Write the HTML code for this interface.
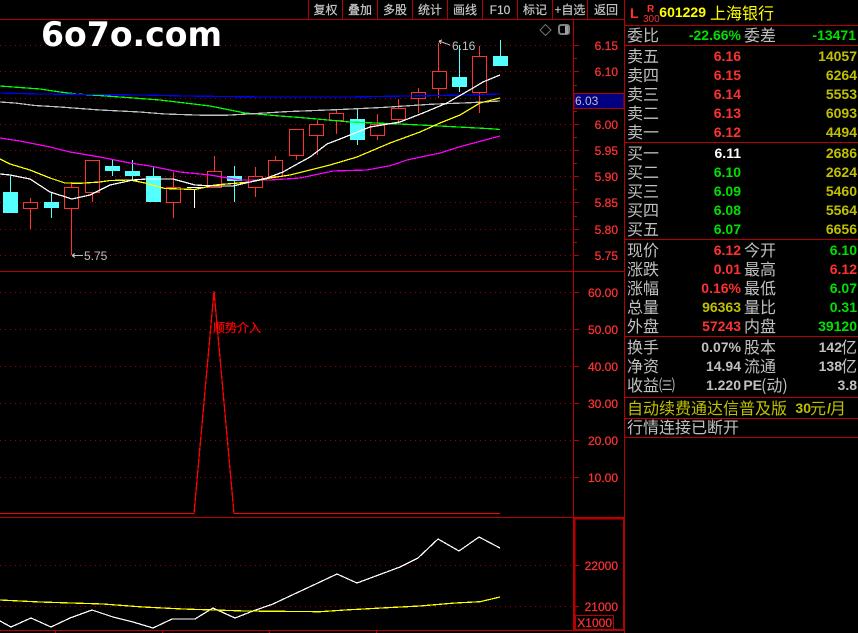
<!DOCTYPE html>
<html><head><meta charset="utf-8"><style>
html,body{margin:0;padding:0;background:#000;width:858px;height:633px;overflow:hidden}
svg{display:block}
.l{font:16px "WenQuanYi Zen Hei","Noto Sans CJK SC",sans-serif;fill:#c0c0c0}
.n{font:bold 14px "Liberation Sans",sans-serif;text-anchor:end}
.a{font:12px "Liberation Sans",sans-serif;fill:#ff3232;stroke:#ff3232;stroke-width:.25;text-anchor:end}
.t{font:12px "WenQuanYi Zen Hei","Noto Sans CJK SC",sans-serif;fill:#c8c8c8;stroke:#c8c8c8;stroke-width:.2;text-anchor:middle}
.r{fill:#ff3232}.g{fill:#00e000}.y{fill:#c0c000}.w{fill:#fff}.s{fill:#c0c0c0}
</style></head><body>
<svg width="858" height="633" viewBox="0 0 858 633" xmlns="http://www.w3.org/2000/svg">
<rect width="858" height="633" fill="#000"/>
<g shape-rendering="crispEdges">
<!-- dotted grid -->
<path d="M0 45.5H573M0 71.5H573M0 98.5H573M0 124.5H573M0 150.5H573M0 176.5H573M0 202.5H573M0 229.5H573M0 255.5H573M0 292.5H573M0 329.5H573M0 366.5H573M0 403.5H573M0 440.5H573M0 477.5H573M0 565.5H573M0 606.5H573" stroke="#a00000" stroke-dasharray="1 4" fill="none"/>
<!-- frame lines -->
<path d="M0 19.5H624M0 271.5H624M0 517.5H624M0 630.5H624M573.5 19V630M624.5 0V633M308.5 0V19M342.5 0V19M377.5 0V19M412.5 0V19M447.5 0V19M482.5 0V19M517.5 0V19M552.5 0V19M587.5 0V19M55.5 630V633M162.5 630V633M269.5 630V633M376.5 630V633" stroke="#b80000" fill="none"/>
<path d="M624 25.5H858M624 45.5H858M624 142.5H858M624 239.5H858M624 336.5H858M624 397.5H858M624 418.5H858M624 437.5H858" stroke="#b80000" fill="none"/>
<!-- axis ticks -->
<path d="M574 45.5h5M574 58.5h3M574 71.5h5M574 85.5h3M574 98.5h5M574 111.5h3M574 124.5h5M574 137.5h3M574 150.5h5M574 163.5h3M574 176.5h5M574 189.5h3M574 202.5h5M574 216.5h3M574 229.5h5M574 242.5h3M574 255.5h5M574 292.5h5M574 329.5h5M574 366.5h5M574 403.5h5M574 440.5h5M574 477.5h5M574 565.5h5M574 606.5h5" stroke="#b80000" fill="none"/>
<!-- 6.03 box -->
<rect x="574" y="93.5" width="50" height="15" fill="#000080" stroke="#b80000"/>
<!-- volume axis box -->
<rect x="574.5" y="518.5" width="49.5" height="111.5" fill="none" stroke="#b80000" stroke-width="2"/>
<rect x="575.5" y="615.5" width="38" height="14" fill="none" stroke="#b80000"/>
<!-- icons -->
<path d="M545.5 24.5L551 30L545.5 35.5L540 30Z" fill="none" stroke="#707070" shape-rendering="auto"/>
<rect x="559" y="25" width="10" height="9" rx="2" fill="none" stroke="#808080" stroke-width="2" shape-rendering="auto"/>
<rect x="565" y="26" width="3" height="8" fill="#a0a0a0"/>
<!-- wicks -->
<path stroke="#ff3232" fill="none" d="M30.5 198V229M71.5 182V255M92.5 192V202M173.5 172V218M214.5 156V171M255.5 167V197M275.5 156V176M296.5 155V160M317.5 120V155M336.5 110V134M377.5 114V140M398.5 99V124M418.5 88V113M438.5 43V98M479.5 46V113"/>
<path stroke="#54ffff" fill="none" d="M10.5 176V192M51.5 192V218M112.5 160V176M132.5 160V181M153.5 166V176M234.5 166V202M357.5 109V145M459.5 45V92M500.5 40V56"/>
<path stroke="#fff" fill="none" d="M194.5 190V208M187 187.5H202"/>
<!-- bodies red -->
<g fill="#000" stroke="#ff3232">
<rect x="23.5" y="202.5" width="14" height="6"/>
<rect x="64.5" y="187.5" width="14" height="21"/>
<rect x="85.5" y="160.5" width="14" height="32"/>
<rect x="166.5" y="187.5" width="14" height="15"/>
<rect x="207.5" y="171.5" width="14" height="16"/>
<rect x="248.5" y="176.5" width="14" height="11"/>
<rect x="268.5" y="160.5" width="14" height="16"/>
<rect x="289.5" y="129.5" width="14" height="26"/>
<rect x="309.5" y="124.5" width="14" height="11"/>
<rect x="329.5" y="113.5" width="14" height="7"/>
<rect x="370.5" y="124.5" width="14" height="11"/>
<rect x="391.5" y="108.5" width="14" height="11"/>
<rect x="411.5" y="92.5" width="14" height="6"/>
<rect x="432.5" y="71.5" width="14" height="17"/>
<rect x="472.5" y="56.5" width="14" height="36"/>
</g>
<!-- bodies cyan -->
<g fill="#54ffff">
<rect x="3" y="192" width="15" height="21"/>
<rect x="44" y="202" width="15" height="6"/>
<rect x="105" y="166" width="15" height="5"/>
<rect x="125" y="171" width="15" height="5"/>
<rect x="146" y="176" width="15" height="26"/>
<rect x="227" y="176" width="15" height="5"/>
<rect x="350" y="119" width="15" height="21"/>
<rect x="452" y="77" width="15" height="10"/>
<rect x="493" y="56" width="15" height="10"/>
</g>
<!-- MA lines -->
<g fill="none" stroke-width="1.25">
<polyline stroke="#00ff00" points="0,86 20,87.5 40,89 60,92 77,94 120,97 160,100 210,106 245,113 280,116 300,117.5 317,119 350,122 400,124 440,126 490,128.7 500,129.5"/>
<polyline stroke="#0000ff" points="0,93 40,94 143,95 184,96 265,97 348,97 407,96 470,95 500,94"/>
<polyline stroke="#c0c0c0" points="0,102 15,103 35,105.5 60,107 100,110 140,112 165,114 205,115.3 225,115.3 265,113 285,111.7 345,109.3 385,107.3 430,104.3 470,102.7 500,101"/>
<polyline stroke="#ff00ff" points="0,138 20,141 50,147 70,152 100,157 130,163 150,166 180,172 210,175 240,180 270,180 300,178 333,171 367,170 390,165.7 407,160 440,153 460,146.7 500,136"/>
<polyline stroke="#ffff00" points="0,159 10,164 30,170 50,178 65,183 80,183.3 100,182 110,180.5 130,180 145,183 165,188.5 195,189.5 215,185 250,182 270,178 290,175 330,165 357,157 390,143 420,132 440,123 460,115 480,103 500,98"/>
<polyline stroke="#ffffff" points="0,174 10,175 30,179 50,192 72,199 90,195 110,185 133,180 147,179 173,179 195,185 213,186 233,186 250,182 267,178 283,172 290,168 310,157 327,144 340,139 370,127 400,122 423,113 447,103 473,88 483,82 500,75"/>
<!-- spike -->
<polyline stroke="#ff0000" points="0,513.5 194,513.5 214,291 234,513.5 500,513.5"/>
<!-- bottom -->
<polyline stroke="#ffffff" points="0,621 11,627 31,618 51,627 70,618 92,610 113,617 133,622 153,628 172,619 195,619 213,608 235,618 253,611 273,604 290,596 320,582 337,574 357,583 400,567 418,558 438,539 459,551 479,537 500,548"/>
<polyline stroke="#ffff00" points="0,600 20,601 40,602 103,604 143,607 183,609 245,611 320,611.7 345,610 387,607.7 420,606 455,603 480,601.7 500,597"/>
<!-- price labels arrows -->
<path d="M72 255.5H83M72 255.5l3-2M72 255.5l3 2" stroke="#c0c0c0" fill="none" stroke-width="1"/>
<path d="M439 41l11 4M439 41l3-1M439 41l2 3" stroke="#c0c0c0" fill="none" stroke-width="1"/>
</g>
</g>
<!-- logo -->
<text x="41" y="46" font-family="'DejaVu Sans','Liberation Sans',sans-serif" font-weight="bold" font-size="34" fill="#fff" textLength="181" lengthAdjust="spacingAndGlyphs">6o7o.com</text>
<text x="84" y="260" font-family="'Liberation Sans',sans-serif" font-size="12" fill="#c0c0c0">5.75</text>
<text x="452" y="50" font-family="'Liberation Sans',sans-serif" font-size="12" fill="#c0c0c0">6.16</text>
<text x="213" y="332" font-family="'WenQuanYi Zen Hei','Noto Sans CJK SC',sans-serif" font-size="12" fill="#ff0000" stroke="#ff0000" stroke-width=".25">顺势介入</text>
<!-- toolbar -->
<text class="t" x="325.5" y="14">复权</text>
<text class="t" x="360" y="14">叠加</text>
<text class="t" x="395" y="14">多股</text>
<text class="t" x="430" y="14">统计</text>
<text class="t" x="465" y="14">画线</text>
<text class="t" x="500" y="14" style="font-family:'Liberation Sans',sans-serif">F10</text>
<text class="t" x="535" y="14">标记</text>
<text class="t" x="570" y="14">+自选</text>
<text class="t" x="606" y="14">返回</text>
<!-- axes -->
<g class="a">
<text x="618" y="50">6.15</text><text x="618" y="76">6.10</text>
<text x="618" y="129">6.00</text><text x="618" y="155">5.95</text><text x="618" y="181">5.90</text><text x="618" y="207">5.85</text><text x="618" y="234">5.80</text><text x="618" y="260">5.75</text>
<text x="618" y="297">60.00</text><text x="618" y="334">50.00</text><text x="618" y="371">40.00</text><text x="618" y="408">30.00</text><text x="618" y="445">20.00</text><text x="618" y="482">10.00</text>
<text x="618" y="570">22000</text><text x="618" y="611">21000</text><text x="612" y="627">X1000</text>
</g>
<text x="575" y="105" font-family="'Liberation Sans',sans-serif" font-size="12" fill="#c0c0c0">6.03</text>
<!-- header -->
<text x="630" y="18" font-family="'Liberation Sans',sans-serif" font-size="14" font-weight="bold" fill="#ff3232">L</text>
<text x="647" y="12" font-family="'Liberation Sans',sans-serif" font-size="10" font-weight="bold" fill="#ff3232">R</text>
<text x="643" y="22" font-family="'Liberation Sans',sans-serif" font-size="10" fill="#ff3232">300</text>
<text class="n" x="706" y="17" style="fill:#ffff00">601229</text>
<text class="l" x="710" y="19" style="fill:#ffff00">上海银行</text>
<!-- labels -->
<g class="l">
<text x="627" y="41">委比</text><text x="744" y="41">委差</text>
<text x="627" y="62">卖五</text><text x="627" y="81">卖四</text><text x="627" y="100">卖三</text><text x="627" y="119">卖二</text><text x="627" y="138">卖一</text>
<text x="627" y="159">买一</text><text x="627" y="178">买二</text><text x="627" y="197">买三</text><text x="627" y="216">买四</text><text x="627" y="235">买五</text>
<text x="627" y="256">现价</text><text x="744" y="256">今开</text>
<text x="627" y="275">涨跌</text><text x="744" y="275">最高</text>
<text x="627" y="294">涨幅</text><text x="744" y="294">最低</text>
<text x="627" y="313">总量</text><text x="744" y="313">量比</text>
<text x="627" y="332">外盘</text><text x="744" y="332">内盘</text>
<text x="627" y="353">换手</text><text x="744" y="353">股本</text>
<text x="627" y="372">净资</text><text x="744" y="372">流通</text>
<text x="627" y="391">收益㈢</text>
<text x="841" y="353">亿</text><text x="841" y="372">亿</text>
<text x="627" y="414" class="y">自动续费通达信普及版</text>
<text x="810" y="414" class="y">元</text><text x="830" y="414" class="y">月</text>
<text x="627" y="433">行情连接已断开</text>
<text x="761" y="391">(动)</text>
</g>
<g class="n">
<text x="741" y="40" class="g">-22.66%</text><text x="856" y="40" class="g">-13471</text>
<text x="741" y="61" class="r">6.16</text><text x="857" y="61" class="y">14057</text>
<text x="741" y="80" class="r">6.15</text><text x="857" y="80" class="y">6264</text>
<text x="741" y="99" class="r">6.14</text><text x="857" y="99" class="y">5553</text>
<text x="741" y="118" class="r">6.13</text><text x="857" y="118" class="y">6093</text>
<text x="741" y="137" class="r">6.12</text><text x="857" y="137" class="y">4494</text>
<text x="741" y="158" class="w">6.11</text><text x="857" y="158" class="y">2686</text>
<text x="741" y="177" class="g">6.10</text><text x="857" y="177" class="y">2624</text>
<text x="741" y="196" class="g">6.09</text><text x="857" y="196" class="y">5460</text>
<text x="741" y="215" class="g">6.08</text><text x="857" y="215" class="y">5564</text>
<text x="741" y="234" class="g">6.07</text><text x="857" y="234" class="y">6656</text>
<text x="741" y="255" class="r">6.12</text><text x="857" y="255" class="g">6.10</text>
<text x="741" y="274" class="r">0.01</text><text x="857" y="274" class="r">6.12</text>
<text x="741" y="293" class="r">0.16%</text><text x="857" y="293" class="g">6.07</text>
<text x="741" y="312" class="y">96363</text><text x="857" y="312" class="g">0.31</text>
<text x="741" y="331" class="r">57243</text><text x="857" y="331" class="g">39120</text>
<text x="741" y="352" class="s">0.07%</text><text x="842" y="352" class="s">142</text>
<text x="741" y="371" class="s">14.94</text><text x="842" y="371" class="s">138</text>
<text x="741" y="390" class="s">1.220</text><text x="762" y="390" class="s">PE</text><text x="857" y="390" class="s">3.8</text>
<text x="811" y="413" class="y">30</text><text x="831" y="413" class="y">/</text>
</g>
</svg>
</body></html>
